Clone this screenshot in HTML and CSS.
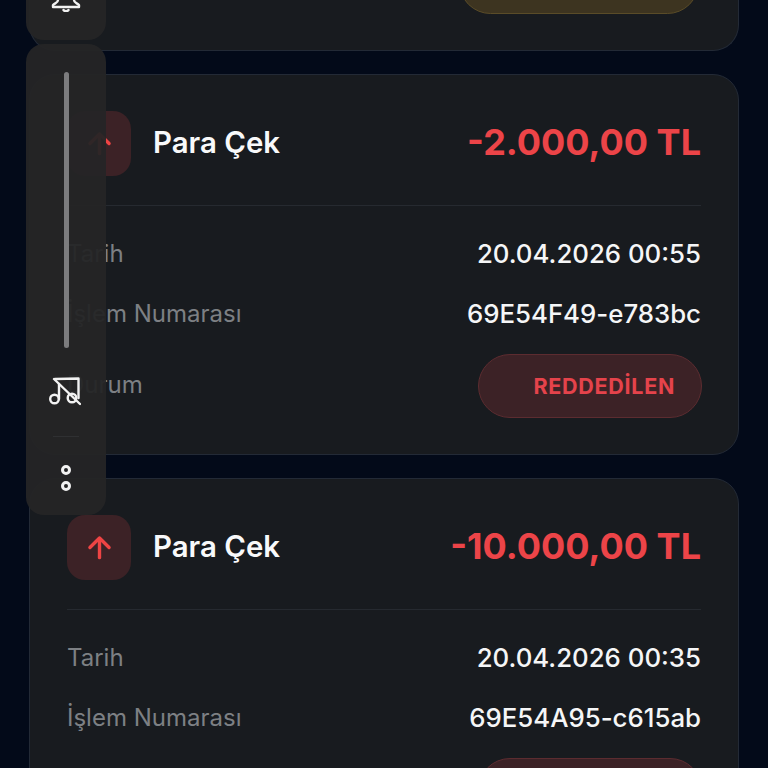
FILE: index.html
```html
<!DOCTYPE html>
<html lang="tr">
<head>
    <meta charset="UTF-8">
    <meta name="viewport" content="width=device-width, initial-scale=1.0">
    <title>İşlem Geçmişi</title>
    <link rel="stylesheet" href="styles.css">
</head>
<body>
    <!-- Transaction list, scrolled -->
    <div class="tx-list">
        <div class="tx-card tx-card-cut">
            <div class="pill pill-pending"></div>
        </div>

        <div class="tx-card">
            <div class="tx-head">
                <div class="tx-title">
                    <div class="tx-icon">
                        <svg width="27" height="27" viewBox="0 0 24 24" fill="none" stroke="#ef4444" stroke-width="3" stroke-linecap="round" stroke-linejoin="round">
                            <path d="M12 21V4"/><path d="M3.500 12L12 3.500l8.500 8.500"/>
                        </svg>
                    </div>
                    <span class="tx-name">Para Çek</span>
                </div>
                <span class="tx-amount">-2.000,00 TL</span>
            </div>
            <div class="tx-row">
                <span class="tx-label">Tarih</span>
                <span class="tx-value">20.04.2026 00:55</span>
            </div>
            <div class="tx-row">
                <span class="tx-label">İşlem Numarası</span>
                <span class="tx-value">69E54F49-e783bc</span>
            </div>
            <div class="tx-row tx-row-status">
                <span class="tx-label">Durum</span>
                <span class="pill pill-rejected">REDDEDİLEN</span>
            </div>
        </div>

        <div class="tx-card">
            <div class="tx-head">
                <div class="tx-title">
                    <div class="tx-icon">
                        <svg width="27" height="27" viewBox="0 0 24 24" fill="none" stroke="#ef4444" stroke-width="3" stroke-linecap="round" stroke-linejoin="round">
                            <path d="M12 21V4"/><path d="M3.500 12L12 3.500l8.500 8.500"/>
                        </svg>
                    </div>
                    <span class="tx-name">Para Çek</span>
                </div>
                <span class="tx-amount">-10.000,00 TL</span>
            </div>
            <div class="tx-row">
                <span class="tx-label">Tarih</span>
                <span class="tx-value">20.04.2026 00:35</span>
            </div>
            <div class="tx-row">
                <span class="tx-label">İşlem Numarası</span>
                <span class="tx-value">69E54A95-c615ab</span>
            </div>
            <div class="tx-row tx-row-status">
                <span></span>
                <span class="pill pill-rejected"></span>
            </div>
        </div>
    </div>

    <!-- Floating side controls -->
    <div class="side-panel side-panel-top">
        <svg class="bell" width="32" height="32" viewBox="0 0 32 32" fill="none" stroke="#f2f2f2" stroke-width="2.400" stroke-linecap="round" stroke-linejoin="round">
            <path d="M8 10v10c0 3-3 3-5 5v2h26v-2c-2-2-5-2-5-5V10"/>
            <path d="M13.500 30c1 1.500 4 1.500 5 0"/>
        </svg>
    </div>
    <div class="side-panel side-panel-main">
        <div class="volume-bar"></div>
        <svg class="music-off" width="34" height="34" viewBox="0 0 34 34" fill="none" stroke="#f2f2f2" stroke-width="2.400" stroke-linecap="round" stroke-linejoin="round">
            <circle cx="7.500" cy="25" r="4.300"/>
            <circle cx="25" cy="24" r="4.300"/>
            <path d="M12 25V10"/>
            <path d="M31.500 24V4.500L8 5"/>
            <path d="M7 5l26 25"/>
        </svg>
        <div class="side-divider"></div>
        <div class="side-dots">
            <span class="dot"></span>
            <span class="dot"></span>
        </div>
    </div>
</body>
</html>
```

FILE: styles.css
```css
html, body {
    height: 100%;
}

body {
    font-family: Inter, "Liberation Sans", sans-serif;
    margin: 0;
    background-color: #030a19;
    color: #f5f6f7;
    overflow: hidden;
    position: relative;
}

/* Transaction list */
.tx-list {
    display: flex;
    flex-direction: column;
    gap: 23px;
    padding: 0 29px;
}

.tx-card {
    background-color: #181b1f;
    border: 1px solid #232a36;
    border-radius: 26px;
    padding: 36px 37px;
}

.tx-card-cut {
    height: 51px;
    box-sizing: border-box;
    border-top: none;
    border-radius: 0 0 26px 26px;
    padding: 0 40px 0 429px;
    overflow: hidden;
}

.tx-head {
    display: flex;
    justify-content: space-between;
    align-items: center;
    padding-bottom: 29px;
    margin-bottom: 17px;
    border-bottom: 1px solid #262a30;
}

.tx-title {
    display: flex;
    align-items: center;
    gap: 22px;
}

.tx-icon {
    width: 64px;
    height: 65px;
    border-radius: 18px;
    background-color: #3c2226;
    display: flex;
    align-items: center;
    justify-content: center;
}

.tx-name {
    font-size: 29.400px;
    font-weight: 600;
    color: #f8f9fa;
    margin-top: -3px;
}

.tx-amount {
    font-size: 36px;
    font-weight: 700;
    color: #ec4448;
    margin-top: -3px;
}

.tx-row {
    display: flex;
    justify-content: space-between;
    align-items: center;
    height: 60px;
}

.tx-row-status {
    height: 64px;
    margin-top: 11px;
}

.tx-row-status .tx-label {
    margin-top: -3px;
}

.tx-label {
    font-size: 24px;
    color: #7d8084;
}

.tx-value {
    font-size: 25.800px;
    font-weight: 500;
    color: #f5f6f7;
}

/* Status pills */
.pill {
    display: flex;
    align-items: center;
    justify-content: flex-end;
    box-sizing: border-box;
    border-radius: 32px;
}

.pill-rejected {
    width: 224px;
    height: 64px;
    margin-right: -1px;
    padding-right: 26px;
    background-color: #3c2226;
    border: 1px solid #5c2c30;
    color: #e5434b;
    font-size: 21.500px;
    font-weight: 700;
    letter-spacing: 0.700px;
}

.pill-pending {
    width: 240px;
    height: 63px;
    margin-top: -49px;
    background-color: #3d3420;
    border: 1px solid #5a4c28;
}

/* Floating side controls */
.side-panel {
    position: absolute;
    left: 26px;
    width: 80px;
    background-color: rgba(37, 37, 38, 0.95);
    border-radius: 18px;
    display: flex;
    flex-direction: column;
    align-items: center;
}

.side-panel-top {
    top: -20px;
    height: 60px;
    overflow: hidden;
}

.side-panel-main {
    top: 44px;
    height: 471px;
}

.volume-bar {
    width: 5px;
    height: 276px;
    margin-top: 28px;
    border-radius: 3px;
    background-color: #7c7c7e;
}

.music-off {
    margin-top: 26px;
    margin-left: -4px;
}

.side-divider {
    width: 26px;
    height: 1px;
    margin-top: 28px;
    background-color: #2f3032;
}

.side-dots {
    display: flex;
    flex-direction: column;
    gap: 6px;
    margin-top: 28px;
}

.dot {
    width: 10px;
    height: 10px;
    box-sizing: border-box;
    border: 3px solid #f2f2f2;
    border-radius: 50%;
}
```
